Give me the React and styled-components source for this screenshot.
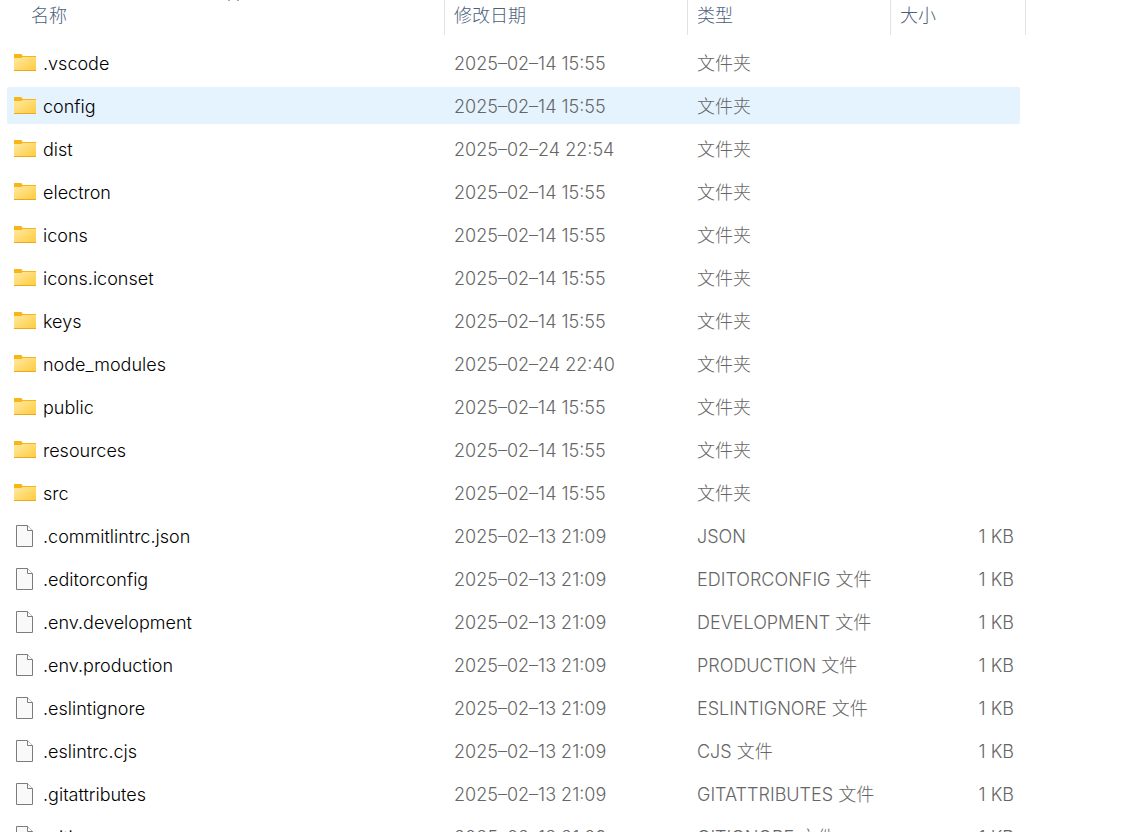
import React from 'react'
import styled, { createGlobalStyle } from 'styled-components'

const Global = createGlobalStyle`
  * {
    box-sizing: border-box;
  }
  body {
    margin: 0;
    background: #fff;
    font-family: Inter, "Noto Sans CJK SC", sans-serif;
    font-size: 18px;
    font-weight: 300;
    line-height: 24px;
  }
`

const Pane = styled.main`
  height: calc(100vh - 8px);
  padding: 0 96px 0 7px;
  overflow: hidden;
`

const FileTable = styled.table`
  display: block;
`

const Head = styled.thead`
  display: block;
`

const HeadRow = styled.tr`
  display: grid;
  grid-template-columns: minmax(200px, 1fr) 243px 203px 135px;
  height: 35px;
  padding-left: 15px;
`

const HeadCell = styled.th`
  position: relative;
  padding: 4px 9px;
  border-right: 1px solid #e2e2e2;
  color: #4c607a;
  font-weight: 300;
  text-align: left;
`

// Sits on the top edge of the sorted column
const SortArrow = styled.svg`
  position: absolute;
  top: -5px;
  left: calc(50% - 5px);
  width: 11px;
  height: 6px;
`

const Body = styled.tbody`
  display: grid;
  gap: 6px;
  padding: 9px 6px 0 0;
`

const Row = styled.tr`
  display: grid;
  grid-template-columns: minmax(200px, 1fr) 243px 203px 129px;
  height: 37px;
  line-height: 35px;
  border-radius: 2px;
  background: ${(props) => (props.$active ? '#e5f3ff' : 'transparent')};
`

const NameCell = styled.td`
  display: flex;
  gap: 6px;
  padding: 0 6px;
  color: #000;
`

const Name = styled.span`
  padding-top: 2px;
`

const Cell = styled.td`
  padding: 2px 6px 0 9px;
  color: #666;
  text-align: ${(props) => (props.$right ? 'right' : 'left')};
`

const Icon = styled.svg`
  flex: none;
  width: 24px;
  height: 24px;
  margin-top: 7px;
`

const FolderIcon = () => (
  <Icon viewBox="0 0 24 24" aria-hidden="true">
    <defs>
      <linearGradient id="folder" x1="0" y1="0" x2="1" y2="1">
        <stop offset="0" stopColor="#ffe9a2" />
        <stop offset="1" stopColor="#ffcb3d" />
      </linearGradient>
    </defs>
    <path d="M1 3.5q0-.5.5-.5H8q.6 0 1 .8L9.500 5H23v5H1z" fill="#f8b518" />
    <path d="M1 7h7.500l1-1H23v14H1z" fill="url(#folder)" />
    <path d="M1 19h22v1H1z" fill="#eba91e" />
  </Icon>
)

const FileIcon = () => (
  <Icon viewBox="0 0 24 24" aria-hidden="true">
    <path d="M3.500 1.500h11l5 5v16h-16z" fill="#f9f9f9" stroke="#7c7c7c" />
    <path d="M14.500 1.500v5h5" fill="#fff" stroke="#7c7c7c" />
  </Icon>
)

const folders = [
  ['.vscode', '2025–02–14 15:55'],
  ['config', '2025–02–14 15:55'],
  ['dist', '2025–02–24 22:54'],
  ['electron', '2025–02–14 15:55'],
  ['icons', '2025–02–14 15:55'],
  ['icons.iconset', '2025–02–14 15:55'],
  ['keys', '2025–02–14 15:55'],
  ['node_modules', '2025–02–24 22:40'],
  ['public', '2025–02–14 15:55'],
  ['resources', '2025–02–14 15:55'],
  ['src', '2025–02–14 15:55'],
]

const files = [
  ['.commitlintrc.json', 'JSON'],
  ['.editorconfig', 'EDITORCONFIG 文件'],
  ['.env.development', 'DEVELOPMENT 文件'],
  ['.env.production', 'PRODUCTION 文件'],
  ['.eslintignore', 'ESLINTIGNORE 文件'],
  ['.eslintrc.cjs', 'CJS 文件'],
  ['.gitattributes', 'GITATTRIBUTES 文件'],
  ['.gitignore', 'GITIGNORE 文件'],
]

const App = () => {
  return (
    <>
      <Global />
      <Pane>
        <FileTable>
          <Head>
            <HeadRow>
              <HeadCell aria-sort="ascending">
                名称
                <SortArrow viewBox="0 0 11 6" aria-hidden="true">
                  <path d="M.5 6 5.500 1l5 5" fill="none" stroke="#555" />
                </SortArrow>
              </HeadCell>
              <HeadCell>修改日期</HeadCell>
              <HeadCell>类型</HeadCell>
              <HeadCell>大小</HeadCell>
            </HeadRow>
          </Head>
          <Body>
            {folders.map(([name, date]) => (
              <Row key={name} $active={name === 'config'}>
                <NameCell><FolderIcon /><Name>{name}</Name></NameCell>
                <Cell>{date}</Cell>
                <Cell>文件夹</Cell>
                <Cell $right />
              </Row>
            ))}
            {files.map(([name, type]) => (
              <Row key={name}>
                <NameCell><FileIcon /><Name>{name}</Name></NameCell>
                <Cell>2025–02–13 21:09</Cell>
                <Cell>{type}</Cell>
                <Cell $right>1 KB</Cell>
              </Row>
            ))}
          </Body>
        </FileTable>
      </Pane>
    </>
  )
}

export default App
